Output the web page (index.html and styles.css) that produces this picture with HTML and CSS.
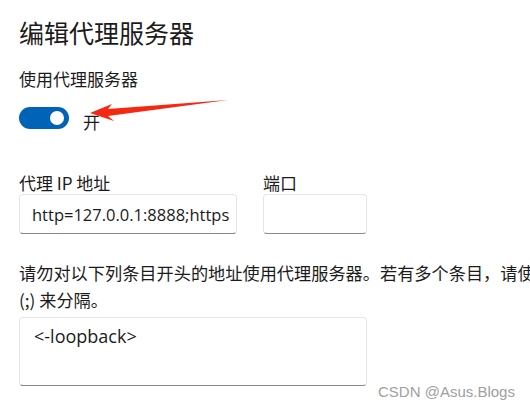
FILE: index.html
```html
<!DOCTYPE html>
<html>
<head>
  <title>编辑代理服务器</title>
  <link rel="stylesheet" href="styles.css">
  <meta charset="utf-8">
</head>
<body lang="zh-CN">
  <div class="panel">
    <h1>编辑代理服务器</h1>
    <div class="lbl">使用代理服务器</div>
    <div class="togrow">
      <span class="tog"><span class="knob"></span></span>
      <span class="togtxt">开</span>
    </div>
    <div class="fields">
      <div class="fld ip">
        <div class="lbl">代理 IP 地址</div>
        <input type="text" class="box" value="http=127.0.0.1:8888;https=127.0.0.1:8888">
      </div>
      <div class="fld port">
        <div class="lbl">端口</div>
        <input type="text" class="box" value="">
      </div>
    </div>
    <p class="note">请勿对以下列条目开头的地址使用代理服务器。若有多个条目，请使用分号 (;) 来分隔。</p>
    <textarea class="box excl">&lt;-loopback&gt;</textarea>
  </div>
  <svg class="arrow" width="150" height="30" viewBox="0 0 150 30">
    <polygon points="0,14 22,5 18,10 138,1 18,17 24,22" fill="#f52812"/>
  </svg>
  <div class="mark">CSDN @Asus.Blogs</div>
</body>
</html>
```

FILE: styles.css
```css
html, body {
  margin: 0;
  height: 100%;
  background: #fff;
}
body {
  position: relative;
  overflow: hidden;
  color: #1b1b1b;
  font-family: "Noto Sans CJK SC", "Open Sans", sans-serif;
}
.panel {
  padding: 14px 0 0 19px;
}
h1 {
  margin: 0;
  font-size: 25px;
  font-weight: 400;
  line-height: 36px;
}
.lbl {
  font-size: 17px;
  line-height: 24px;
}
.panel > .lbl {
  margin-top: 17px;
}
.togrow {
  display: flex;
  align-items: center;
  gap: 14px;
  margin-top: 11px;
}
.tog {
  display: flex;
  align-items: center;
  justify-content: flex-end;
  box-sizing: border-box;
  width: 50px;
  height: 22px;
  padding-right: 5px;
  border-radius: 11px;
  background: #0063b8;
}
.knob {
  width: 14px;
  height: 14px;
  border-radius: 50%;
  background: #fff;
}
.togtxt {
  font-size: 17px;
  line-height: 24px;
  margin-top: 8px;
}
.fields {
  display: flex;
  gap: 26px;
  margin-top: 38px;
}
.fld .lbl {
  line-height: 22px;
}
.ip .box { width: 218px; }
.port .box { width: 104px; }
.box {
  display: block;
  box-sizing: border-box;
  height: 40px;
  margin: 0;
  padding: 0 7px 0 12px;
  border: 1px solid #e5e5e5;
  border-bottom-color: #8a8a8a;
  border-radius: 4px;
  background: #fff;
  color: #1b1b1b;
  font-family: "Open Sans", sans-serif;
  font-size: 16.5px;
  outline: none;
}
.note {
  width: 575px;
  margin: 25px 0 0;
  font-size: 17.2px;
  line-height: 27px;
}
.excl {
  width: 348px;
  height: 69px;
  margin-top: 4px;
  padding: 5px 14px;
  resize: none;
  font-size: 18px;
  line-height: 26px;
}
.arrow {
  position: absolute;
  left: 90px;
  top: 99px;
}
.mark {
  position: absolute;
  left: 378px;
  top: 383px;
  color: #a0a0a0;
  font-family: "Liberation Sans", Arial, sans-serif;
  font-size: 15px;
}
```
